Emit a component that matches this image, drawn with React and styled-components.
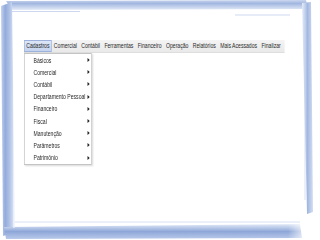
import React from 'react';
import styled, { createGlobalStyle } from 'styled-components';

const Global = createGlobalStyle`
  html, body { margin: 0; padding: 0; background: #ffffff; }
  #root { width: 320px; height: 240px; }
`;

const Slide = styled.div`
  position: relative;
  width: 320px;
  height: 240px;
  overflow: hidden;
  background: #ffffff;
  font-family: "Liberation Sans", Arial, sans-serif;
`;

const Frame = styled.svg`
  position: absolute;
  left: 0;
  top: 0;
  pointer-events: none;
`;

const Content = styled.div`
  position: relative;
  padding: 40px 0 0 24px;
`;

/* the screenshot font is a narrow Tahoma-like face: squeeze the menu horizontally */
const Condensed = styled.div`
  width: 357px;
  transform: scaleX(0.73);
  transform-origin: left top;
`;

const MenuBar = styled.div`
  position: relative;
  display: flex;
  align-items: center;
  justify-content: space-between;
  height: 13px;
  padding-right: 5px;
  background: linear-gradient(#f4f4f4, #e9e9e9);
  border-bottom: 1px solid #dedede;
  box-sizing: border-box;
`;

const MenuItem = styled.div`
  height: 12px;
  padding: 0 2px;
  font-size: 7px;
  line-height: 10px;
  color: #2a2a2a;
  white-space: nowrap;
  box-sizing: border-box;
  border: 1px solid ${(p) => (p.active ? '#9cb2dc' : 'transparent')};
  background: ${(p) => (p.active ? 'linear-gradient(#dde6f6, #c4d3ee)' : 'transparent')};
`;

const Dropdown = styled.div`
  position: absolute;
  left: 0;
  top: 13px;
  width: 93px;
  background: #ffffff;
  border: 1px solid #c4c4c4;
  box-shadow: 1px 1px 2px rgba(0, 0, 0, 0.15);
  box-sizing: border-box;
`;

const DropItem = styled.div`
  display: flex;
  align-items: center;
  justify-content: space-between;
  height: 12.2px;
  padding: 0 2px 0 12px;
  font-size: 7px;
  color: #2a2a2a;
  white-space: nowrap;
`;

const Arrow = styled.span`
  width: 0;
  height: 0;
  border-top: 2px solid transparent;
  border-bottom: 2px solid transparent;
  border-left: 3px solid #222;
`;

const menu = [
  'Cadastros',
  'Comercial',
  'Contábil',
  'Ferramentas',
  'Financeiro',
  'Operação',
  'Relatórios',
  'Mais Acessados',
  'Finalizar',
];

const cadastros = [
  'Básicos',
  'Comercial',
  'Contábil',
  'Departamento Pessoal',
  'Financeiro',
  'Fiscal',
  'Manutenção',
  'Parâmetros',
  'Patrimônio',
];

function BrushFrame() {
  return (
    <Frame width="320" height="240" viewBox="0 0 320 240">
      <defs>
        <linearGradient id="gTop" x1="0" y1="0" x2="0" y2="1">
          <stop offset="0" stopColor="#c9d5ee" />
          <stop offset="0.35" stopColor="#a2b7e0" />
          <stop offset="1" stopColor="#e4ebf8" />
        </linearGradient>
        <linearGradient id="gLeft" x1="0" y1="0" x2="1" y2="0">
          <stop offset="0" stopColor="#c6d3ee" />
          <stop offset="0.3" stopColor="#93abdb" />
          <stop offset="0.65" stopColor="#b4c6e8" />
          <stop offset="1" stopColor="#e6edf9" />
        </linearGradient>
        <linearGradient id="gRight" x1="0" y1="0" x2="1" y2="0">
          <stop offset="0" stopColor="#e6edf9" />
          <stop offset="0.5" stopColor="#a3b8e0" />
          <stop offset="1" stopColor="#d4def3" />
        </linearGradient>
        <linearGradient id="gBottom" x1="0" y1="0" x2="0" y2="1">
          <stop offset="0" stopColor="#e3eaf8" />
          <stop offset="0.5" stopColor="#8ea7d8" />
          <stop offset="1" stopColor="#b9c9ea" />
        </linearGradient>
        <linearGradient id="gBottomFade" x1="0" y1="0" x2="1" y2="0">
          <stop offset="0" stopColor="#fff" stopOpacity="0" />
          <stop offset="0.8" stopColor="#fff" stopOpacity="0" />
          <stop offset="1" stopColor="#fff" stopOpacity="1" />
        </linearGradient>
      </defs>
      <path d="M6 1 L306 0 L308 9 L12 10 Z" fill="url(#gTop)" />
      <path d="M1 6 L12 2 L15 232 L3 236 Z" fill="url(#gLeft)" />
      <path d="M302 3 L311 2 L313 212 L307 214 Z" fill="url(#gRight)" />
      <path d="M4 227 L300 224 L302 238 L6 239 Z" fill="url(#gBottom)" />
      <rect x="200" y="222" width="110" height="18" fill="url(#gBottomFade)" />
      <line x1="14" y1="12" x2="14" y2="228" stroke="#ffffff" strokeWidth="1.2" opacity="0.8" />
      <line x1="12" y1="11.5" x2="80" y2="11.5" stroke="#b7c7e9" strokeWidth="0.7" />
      <line x1="235" y1="15" x2="290" y2="15" stroke="#b7c7e9" strokeWidth="0.7" />
      <line x1="15" y1="222" x2="300" y2="222" stroke="#d6e0f3" strokeWidth="1" />
      <line x1="305" y1="20" x2="305" y2="200" stroke="#cdd8f0" strokeWidth="0.8" />
    </Frame>
  );
}

export default function App() {
  return (
    <Slide>
      <Global />
      <BrushFrame />
      <Content>
        <Condensed>
          <MenuBar>
            {menu.map((m, i) => (
              <MenuItem key={m} active={i === 0}>
                {m}
              </MenuItem>
            ))}
            <Dropdown>
              {cadastros.map((c) => (
                <DropItem key={c}>
                  <span>{c}</span>
                  <Arrow />
                </DropItem>
              ))}
            </Dropdown>
          </MenuBar>
        </Condensed>
      </Content>
    </Slide>
  );
}
